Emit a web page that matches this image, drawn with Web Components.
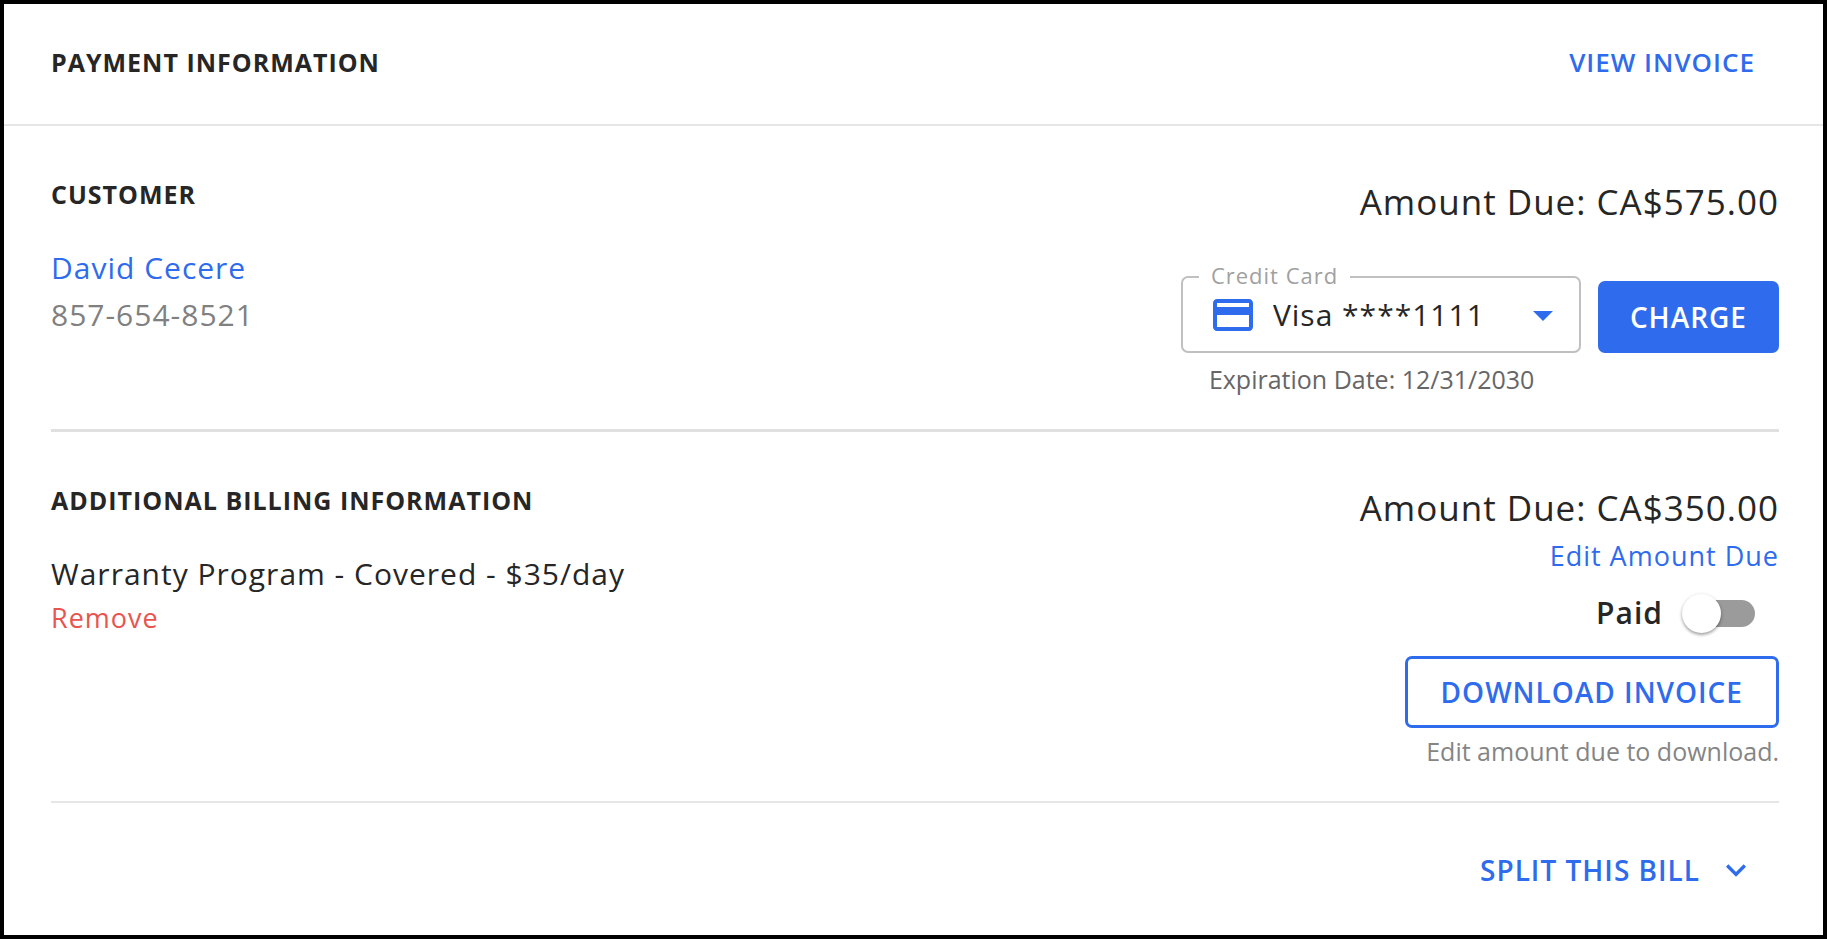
<!DOCTYPE html>
<html lang="en">
<head>
<meta charset="utf-8">
<meta name="viewport" content="width=device-width, initial-scale=1">
<title>Payment information</title>
<style>
  body {
    margin: 0;
    background: #fff;
    color: #262626;
    font-family: "Open Sans", "Noto Sans", sans-serif;
    letter-spacing: 1px;
    --blue: #2f6bed;
    --line: #e0e0e0;
  }
</style>
</head>
<body>
<payment-panel></payment-panel>

<script>
const define = (name, html) => {
  const template = document.createElement('template');
  template.innerHTML = html;
  customElements.define(name, class extends HTMLElement {
    constructor() {
      super();
      this.attachShadow({ mode: 'open' }).append(template.content.cloneNode(true));
    }
  });
};

/* Button: text (default), "compact", "filled" or "outlined" */
define('action-button', `
  <style>
    :host { display: block; }
    button {
      display: flex; align-items: center; justify-content: center; gap: 16px;
      box-sizing: border-box; height: 72px; padding: 0 24px;
      border: 0; border-radius: 7px; background: none; color: var(--blue);
      font: 600 28px/40px "Open Sans", sans-serif; letter-spacing: inherit;
      white-space: nowrap; cursor: pointer;
    }
    :host([kind="compact"]) button { height: 36px; font-size: 26px; line-height: 36px; }
    :host([kind="filled"]) button { background: var(--blue); color: #fff; padding: 0 32px; }
    :host([kind="outlined"]) button { border: 3px solid var(--blue); padding: 0 33px; }
  </style>
  <button type="button"><slot></slot></button>
`);

/* Small text link; the tone comes from the "tone" attribute */
define('text-link', `
  <style>
    :host { display: block; }
    a { color: var(--blue); text-decoration: none; }
    :host([tone="danger"]) a { color: #e8554e; }
  </style>
  <a href="#"><slot></slot></a>
`);

define('panel-header', `
  <style>
    :host {
      display: flex; justify-content: space-between; align-items: center;
      padding: 40px 44px 44px 47px; border-bottom: 2px solid #e6e6e6;
    }
    h1 { margin: 0; font-size: 25px; line-height: 36px; font-weight: 700; }
  </style>
  <h1><slot></slot></h1>
  <slot name="action"></slot>
`);

/* One billing block: heading and details left, amount and actions right */
define('billing-section', `
  <style>
    :host {
      display: flex; justify-content: space-between; gap: 32px;
      margin: 0 44px 0 47px; padding: 50px 0 33px;
      border-bottom: 3px solid var(--line);
    }
    :host([thin]) { border-bottom: 2px solid #e6e6e6; }
    h2 { margin: 0 0 32px; font-size: 25px; line-height: 36px; font-weight: 700; }
    .details { font-size: 30px; line-height: 47px; }
    .side { display: flex; flex-direction: column; align-items: flex-end; }
    .amount { margin: 0; font-size: 35px; line-height: 52px; }
  </style>
  <div class="details"><h2><slot name="heading"></slot></h2><slot></slot></div>
  <div class="side"><p class="amount"><slot name="amount"></slot></p><slot name="side"></slot></div>
`);

define('card-select', `
  <style>
    :host { display: block; width: 400px; }
    fieldset {
      box-sizing: border-box; min-width: 0; margin: 0; padding: 0 12px 14px 16px;
      border: 2px solid #c0c0c0; border-radius: 7px;
    }
    legend { padding: 0 12px 4px; font-size: 22px; line-height: 28px; color: #a0a0a0; }
    .row { display: flex; align-items: center; height: 44px; padding-left: 10px; }
    svg { flex: none; width: 48px; height: 48px; fill: var(--blue); }
    select {
      flex: 1; min-width: 0; height: 44px; margin: 0; padding: 0 0 0 16px;
      appearance: none; border: 0; background: none; color: inherit;
      font: 400 30px/44px "Open Sans", sans-serif; letter-spacing: inherit;
    }
  </style>
  <fieldset>
    <legend><label for="card">Credit Card</label></legend>
    <div class="row">
      <svg viewBox="0 0 24 24" aria-hidden="true"><path d="M20 4H4c-1.11 0-1.99.89-1.99 2L2 18c0 1.11.89 2 2 2h16c1.11 0 2-.89 2-2V6c0-1.11-.89-2-2-2zm0 14H4v-6h16v6zm0-10H4V6h16v2z"/></svg>
      <select id="card"><option>Visa ****1111</option></select>
      <svg viewBox="0 0 24 24" aria-hidden="true"><path d="M7 10l5 5 5-5z"/></svg>
    </div>
  </fieldset>
`);

define('charge-form', `
  <style>
    :host { display: block; margin-top: 33px; }
    .row { display: flex; align-items: flex-end; gap: 17px; }
    p { margin: 9px 0 0 28px; font-size: 25px; line-height: 34px; color: #666; letter-spacing: 0; }
  </style>
  <div class="row">
    <card-select></card-select>
    <action-button kind="filled">CHARGE</action-button>
  </div>
  <p><slot></slot></p>
`);

define('paid-switch', `
  <style>
    :host { display: block; margin: 15px 24px 23px 0; }
    label {
      display: flex; align-items: center; gap: 19px;
      font-size: 30px; line-height: 40px; font-weight: 600;
    }
    input {
      appearance: none; position: relative; box-sizing: border-box;
      width: 73px; height: 27px; margin: 0; border-radius: 14px;
      background: linear-gradient(to right, transparent 20px, #9b9b9b 20px);
    }
    input::before {
      content: ""; position: absolute; left: 0; top: -6px;
      width: 39px; height: 39px; border-radius: 50%; background: #fff;
      box-shadow: 0 2px 3px rgba(0,0,0,.28), 0 1px 4px rgba(0,0,0,.14);
    }
    input:checked { background: var(--blue); }
    input:checked::before { left: 34px; }
  </style>
  <label>Paid <input type="checkbox" role="switch"></label>
`);

define('hint-text', `
  <style>
    :host { display: block; margin-top: 6px; font-size: 25px; line-height: 34px; color: #858585; letter-spacing: 0; }
  </style>
  <slot></slot>
`);

define('payment-panel', `
  <style>
    :host { display: block; box-sizing: border-box; min-height: 100vh; border: 4px solid #000; background: #fff; }
    .phone { color: #808080; }
    .small { font-size: 27px; line-height: 42px; }
    .edit { font-size: 27px; line-height: 44px; }
    footer { display: flex; justify-content: flex-end; padding: 31px 43px 25px 47px; }
    footer svg { width: 40px; height: 40px; fill: currentColor; }
  </style>
  <panel-header>PAYMENT INFORMATION<action-button slot="action" kind="compact">VIEW INVOICE</action-button></panel-header>
  <main>
    <billing-section>
      <span slot="heading">CUSTOMER</span>
      <text-link>David Cecere</text-link>
      <div class="phone">857-654-8521</div>
      <span slot="amount">Amount Due: CA$575.00</span>
      <charge-form slot="side">Expiration Date: 12/31/2030</charge-form>
    </billing-section>
    <billing-section thin>
      <span slot="heading">ADDITIONAL BILLING INFORMATION</span>
      <div>Warranty Program - Covered - $35/day</div>
      <text-link class="small" tone="danger">Remove</text-link>
      <span slot="amount">Amount Due: CA$350.00</span>
      <text-link slot="side" class="edit">Edit Amount Due</text-link>
      <paid-switch slot="side"></paid-switch>
      <action-button slot="side" kind="outlined">DOWNLOAD INVOICE</action-button>
      <hint-text slot="side">Edit amount due to download.</hint-text>
    </billing-section>
  </main>
  <footer>
    <action-button>SPLIT THIS BILL
      <svg viewBox="0 0 24 24" aria-hidden="true"><path d="M7.41 8.59L12 13.17l4.59-4.58L18 10l-6 6-6-6z"/></svg>
    </action-button>
  </footer>
`);
</script>
</body>
</html>
